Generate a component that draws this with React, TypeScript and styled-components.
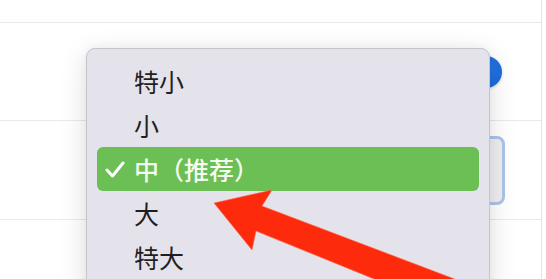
import styled, { createGlobalStyle } from "styled-components"

const GlobalStyle = createGlobalStyle`
    html, body {
        margin: 0;
        padding: 0;
        background: #fff;
        overflow: hidden;
    }
    body {
        font-family: "Noto Sans CJK SC", "Noto Sans", sans-serif;
    }
`

const Page = styled.div`
    position: relative;
    width: 546px;
    height: 279px;
    overflow: hidden;
    background: #fff;
`

const Settings = styled.div`
    width: 541px;
    height: 279px;
    border-right: 1px solid #e4e4e6;
    display: flex;
    flex-direction: column;
`

const Row = styled.div<{ $h: number }>`
    height: ${p => p.$h}px;
    flex-shrink: 0;
    border-bottom: 1px solid #e9e9eb;
    display: flex;
    align-items: center;
    justify-content: flex-end;
`

const Knob = styled.div`
    width: 32px;
    height: 32px;
    margin-right: 39px;
    border-radius: 50%;
    background: radial-gradient(circle at 45% 40%, #2a7ae8, #1763d6);
    box-shadow: 0 1px 3px rgba(0, 0, 0, 0.2);
`

const SelectBox = styled.div`
    width: 120px;
    height: 63px;
    margin-right: 36px;
    border: 3px solid #abc4e8;
    border-radius: 8px;
    background: #efeff2;
`

const Menu = styled.div`
    position: absolute;
    left: 86px;
    top: 48px;
    width: 382px;
    height: 260px;
    padding: 10px;
    background: #e4e3eb;
    border: 1px solid #c6c5cb;
    border-radius: 9px;
    box-shadow: 0 6px 28px rgba(0, 0, 0, 0.13), 0 0 10px rgba(0, 0, 0, 0.05);
`

const Item = styled.div<{ $active?: boolean }>`
    position: relative;
    height: 44px;
    display: flex;
    align-items: center;
    padding-left: 37px;
    border-radius: 6px;
    font-size: 25px;
    line-height: 1;
    font-weight: ${p => (p.$active ? 500 : 400)};
    color: ${p => (p.$active ? "#f4fbef" : "#1f1f22")};
    background: ${p => (p.$active ? "#6bbf55" : "transparent")};
`

const Check = styled.svg`
    position: absolute;
    left: 8px;
    top: 14px;
`

const Arrow = styled.svg`
    position: absolute;
    left: 0;
    top: 0;
    pointer-events: none;
`

const sizes = ["特小", "小", "中（推荐）", "大", "特大"]

export default function App() {
    return (
        <>
            <GlobalStyle />
            <Page>
                <Settings>
                    <Row $h={22} />
                    <Row $h={97}>
                        <Knob />
                    </Row>
                    <Row $h={98}>
                        <SelectBox />
                    </Row>
                </Settings>
                <Menu>
                    {sizes.map((s, i) => (
                        <Item key={s} $active={i === 2}>
                            {i === 2 && (
                                <Check width="20" height="17" viewBox="0 0 20 17">
                                    <path d="M2 9 L7.5 15 L18 2" fill="none" stroke="#fff" strokeWidth="3" strokeLinecap="round" strokeLinejoin="round" />
                                </Check>
                            )}
                            {s}
                        </Item>
                    ))}
                </Menu>
                <Arrow width="546" height="279" viewBox="0 0 546 279">
                    <polygon
                        points="214,203 272,190 262,206 510,300 470,318 256,231 252,250"
                        fill="#fd2a0b"
                        stroke="#ff6a4f"
                        strokeWidth="0.6"
                        strokeLinejoin="miter"
                    />
                </Arrow>
            </Page>
        </>
    )
}
